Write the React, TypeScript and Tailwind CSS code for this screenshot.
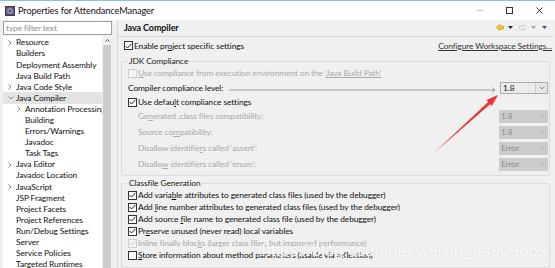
import type { ReactNode } from 'react'

const tree: [string, number, string][] = [
  ['Resource', 0, '>'],
  ['Builders', 0, ''],
  ['Deployment Assembly', 0, ''],
  ['Java Build Path', 0, ''],
  ['Java Code Style', 0, '>'],
  ['Java Compiler', 0, 'v'],
  ['Annotation Processing', 1, '>'],
  ['Building', 1, ''],
  ['Errors/Warnings', 1, ''],
  ['Javadoc', 1, ''],
  ['Task Tags', 1, ''],
  ['Java Editor', 0, '>'],
  ['Javadoc Location', 0, ''],
  ['JavaScript', 0, '>'],
  ['JSP Fragment', 0, ''],
  ['Project Facets', 0, ''],
  ['Project References', 0, ''],
  ['Run/Debug Settings', 0, ''],
  ['Server', 0, ''],
  ['Service Policies', 0, ''],
  ['Targeted Runtimes', 0, ''],
]

function Check({ checked, disabled }: { checked?: boolean; disabled?: boolean }) {
  return (
    <span className={`w-[9px] h-[9px] shrink-0 border flex items-center justify-center ${disabled ? 'border-[#cfcfcf] bg-[#f4f4f4]' : 'border-[#333] bg-white'}`}>
      {checked && (
        <svg width="7" height="6" viewBox="0 0 7 6">
          <path d="M0.6 3 L2.6 5 L6.4 0.8" fill="none" stroke={disabled ? '#c8c8c8' : '#222'} strokeWidth="1" />
        </svg>
      )}
    </span>
  )
}

function Chevron({ dir, light }: { dir: string; light?: boolean }) {
  const c = light ? '#b5b5b5' : '#8a8a8a'
  return dir === 'v' ? (
    <svg width="6" height="4" viewBox="0 0 6 4"><path d="M0.5 0.5 L3 3 L5.5 0.5" fill="none" stroke={c} /></svg>
  ) : (
    <svg width="4" height="6" viewBox="0 0 4 6"><path d="M0.5 0.5 L3 3 L0.5 5.5" fill="none" stroke={c} /></svg>
  )
}

function Combo({ value }: { value: string }) {
  return (
    <div className="w-[49px] h-[13px] bg-[#cccccc] flex items-center justify-between pl-[2px] pr-[3px] text-[#8c8c8c]">
      <span>{value}</span>
      <Chevron dir="v" light />
    </div>
  )
}

function CheckRow({ label, checked, disabled, h = 'h-[12px]' }: { label: ReactNode; checked?: boolean; disabled?: boolean; h?: string }) {
  return (
    <div className={`flex items-center gap-[1px] whitespace-nowrap ${h}`}>
      <Check checked={checked} disabled={disabled} />
      <span className={disabled ? 'text-[#a9a9a9]' : 'text-[#111]'}>{label}</span>
    </div>
  )
}

export default function App() {
  return (
    <div className="relative w-[555px] h-[268px] overflow-hidden bg-[#f0f0f0] font-['Lato','Noto_Sans','Liberation_Sans',sans-serif] text-[8.4px] tracking-[-0.1px] leading-none text-[#111]">
      {/* title bar */}
      <div className="h-[20px] bg-white border-t border-[#8dbde8] flex items-center pl-[5px]">
        <svg width="10" height="10" viewBox="0 0 10 10">
          <rect x="0.5" y="0.5" width="9" height="9" fill="#5a5670" stroke="#3b3850" />
          <circle cx="5" cy="5" r="3" fill="#9a8fd0" />
          <circle cx="5" cy="5" r="1.4" fill="#5a5670" />
        </svg>
        <span className="ml-[3px] text-[9.2px]">Properties for AttendanceManager</span>
        <div className="ml-auto flex items-center gap-[23px] pr-[12px]">
          <span className="w-[6px] h-px bg-[#c2c2c2]" />
          <span className="w-[7px] h-[7px] border border-[#333]" />
          <svg width="7" height="7" viewBox="0 0 7 7"><path d="M0.5 0.5 L6.5 6.5 M6.5 0.5 L0.5 6.5" stroke="#333" /></svg>
        </div>
      </div>

      <div className="flex h-[248px]">
        {/* left panel */}
        <div className="w-[117px] pl-[3px] pr-[5px] flex flex-col">
          <div className="h-[14px] mt-[1px] bg-white border border-[#a0a0a0] flex items-center pl-[2px] text-[#8e8e8e]">type filter text</div>
          <div className="flex-1 mt-[1px] bg-white flex overflow-hidden">
            <div className="flex-1 min-w-0 pt-[1px] overflow-hidden">
              {tree.map(([name, level, chev]) => (
                <div key={name} className={`h-[11.1px] flex items-center whitespace-nowrap ${name === 'Java Compiler' ? 'bg-[#e3e3e3]' : ''} ${level ? 'pl-[14px]' : 'pl-[5px]'}`}>
                  <span className="w-[8px] shrink-0 flex items-center">{chev && <Chevron dir={chev} />}</span>
                  <span>{name}</span>
                </div>
              ))}
            </div>
            <div className="w-[10px] shrink-0 flex flex-col bg-[#f0f0f0]">
              <div className="h-[9px] flex items-center justify-center">
                <svg width="5" height="3" viewBox="0 0 5 3"><path d="M0.5 2.5 L2.5 0.5 L4.5 2.5" fill="none" stroke="#606060" /></svg>
              </div>
              <div className="flex-1 mx-[1px] bg-[#cdcdcd]" />
            </div>
          </div>
        </div>

        {/* right panel */}
        <div className="flex-1 mr-[2px] border-l border-[#d6d6d6] flex flex-col">
          <div className="h-[17px] border-b border-[#dadada] flex items-center pl-[6px] pr-[6px]">
            <span className="font-bold text-[9px]">Java Compiler</span>
            <div className="ml-auto flex items-center gap-[4px]">
              <svg width="8" height="7" viewBox="0 0 8 7"><path d="M0.5 3.5 L3.5 0.5 L3.5 2 L7.5 2 L7.5 5 L3.5 5 L3.5 6.5 Z" fill="#f5c542" stroke="#d69a12" strokeWidth="0.8" /></svg>
              <svg width="5" height="3" viewBox="0 0 5 3"><path d="M0 0 L5 0 L2.5 3 Z" fill="#222" /></svg>
              <svg width="8" height="7" viewBox="0 0 8 7" className="ml-[2px]"><path d="M7.5 3.5 L4.5 0.5 L4.5 2 L0.5 2 L0.5 5 L4.5 5 L4.5 6.5 Z" fill="#f0f0f0" stroke="#c4c4c4" strokeWidth="0.8" /></svg>
              <svg width="5" height="3" viewBox="0 0 5 3"><path d="M0 0 L5 0 L2.5 3 Z" fill="#a9a9a9" /></svg>
              <svg width="5" height="3" viewBox="0 0 5 3" className="ml-[2px]"><path d="M0 0 L5 0 L2.5 3 Z" fill="#5b3e9a" /></svg>
            </div>
          </div>

          <div className="h-[19px] flex items-center pl-[6px] pr-[1px]">
            <CheckRow checked label={<>Enable pr<u>o</u>ject specific settings</>} />
            <span className="ml-auto underline text-[#333]">Configure Workspace Settings...</span>
          </div>

          <div className="px-[3px] pr-[3px]">
            <fieldset className="border border-[#dcdcdc] rounded-[2px] pl-[6px] pr-[1px] pb-[3px]">
              <legend className="px-[1px] h-[12px] leading-[12px] text-[#222]">JDK Compliance</legend>
              <div className="h-[13px] flex items-center">
                <CheckRow disabled label={<><u>U</u>se compliance from execution environment on the <u>'Java Build Path'</u></>} />
              </div>
              <div className="h-[16px] flex items-center">
                <span>Compiler compliance level:</span>
                <div className="ml-auto w-[48px] h-[12px] border border-[#acacac] bg-[#e6e6e6] flex items-center">
                  <span className="flex-1 h-full border-r border-[#c8c8c8] pl-[2px] flex items-center bg-[#ececec]">1.8</span>
                  <span className="w-[11px] flex justify-center"><Chevron dir="v" /></span>
                </div>
              </div>
              <div className="h-[12px] flex items-center">
                <CheckRow checked label={<>Use defau<u>l</u>t compliance settings</>} />
              </div>
              {[
                [<>Ge<u>n</u>erated .class files compatibility:</>, '1.8'],
                [<>Source co<u>m</u>patibility:</>, '1.8'],
                [<>Disallow identifie<u>r</u>s called 'assert':</>, 'Error'],
                [<>Disallo<u>w</u> identifiers called 'enum':</>, 'Error'],
              ].map(([label, v], i) => (
                <div key={i} className="h-[16px] flex items-center pl-[10px] text-[#a9a9a9]">
                  <span>{label}</span>
                  <div className="ml-auto"><Combo value={v as string} /></div>
                </div>
              ))}
            </fieldset>

            <fieldset className="mt-[1px] border border-[#dcdcdc] rounded-[2px] pl-[6px] pr-[1px] pb-[6px]">
              <legend className="px-[1px] h-[12px] leading-[12px] text-[#222]">Classfile Generation</legend>
              <CheckRow checked label={<>Add varia<u>b</u>le attributes to generated class files (used by the debugger)</>} />
              <CheckRow checked label={<>Add <u>l</u>ine number attributes to generated class files (used by the debugger)</>} />
              <CheckRow checked label={<>Add source <u>f</u>ile name to generated class file (used by the debugger)</>} />
              <CheckRow checked label={<>Pr<u>e</u>serve unused (never read) local variables</>} />
              <CheckRow checked disabled label={<>Inline finally bloc<u>k</u>s (larger class files, but improved performance)</>} />
              <CheckRow label={<><u>S</u>tore information about method parameters (usable via reflection)</>} />
            </fieldset>
          </div>
        </div>
      </div>

      {/* annotations drawn on the screenshot */}
      <svg className="absolute inset-0 pointer-events-none" width="555" height="268">
        <path d="M229 90 L495 90 M492 87.5 L495 90 L492 92.5" fill="none" stroke="#8d8d8d" strokeWidth="0.8" />
        <polygon points="434,153 488.1,102 486.4,100.1 498,95 491.8,106.1 490.1,104.2" fill="#ee3434" />
      </svg>
      <div className="absolute right-[8px] bottom-[9px] font-['Liberation_Sans',sans-serif] text-[17px] leading-none text-white/90 [text-shadow:0_0_1px_rgba(170,170,170,0.5)]">
        https://blog.csdn.net/weixin_44909662
      </div>
    </div>
  )
}
